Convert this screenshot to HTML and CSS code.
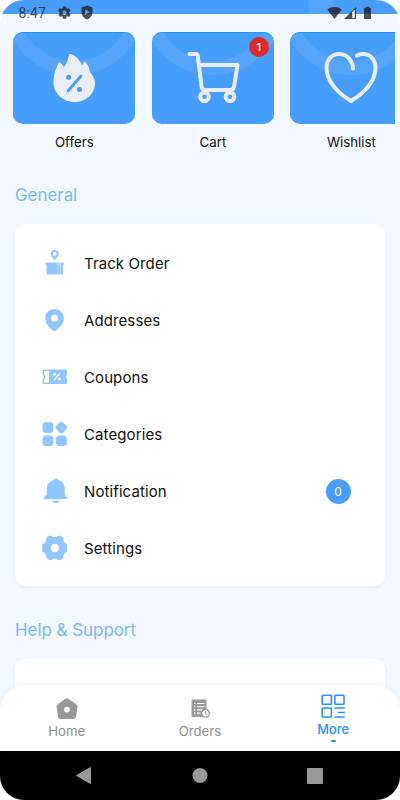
FILE: index.html
```html
<!DOCTYPE html>
<html lang="en">
<head>
<meta charset="utf-8">
<title>More</title>
<link rel="stylesheet" href="styles.css">
</head>
<body>
<div class="phone">
  <div class="status">
    <span class="time">8:47</span>
    <svg class="gear" viewBox="0 0 24 24" width="15" height="15"><path fill="currentColor" fill-rule="evenodd" d="M19.4 13a7.500 7.500 0 0 0 0-2l2.100-1.600a.5.5 0 0 0 .1-.6l-2-3.500a.5.5 0 0 0-.6-.2l-2.500 1a7 7 0 0 0-1.700-1l-.4-2.700a.5.5 0 0 0-.5-.4h-4a.5.5 0 0 0-.5.4L9 5.100a7 7 0 0 0-1.700 1l-2.500-1a.5.5 0 0 0-.6.2l-2 3.500a.5.5 0 0 0 .1.600L4.500 11a8 8 0 0 0 0 2l-2.100 1.600a.5.5 0 0 0-.1.600l2 3.500c.1.200.4.300.6.200l2.500-1a7 7 0 0 0 1.700 1l.4 2.700c0 .2.200.4.500.4h4c.3 0 .5-.2.500-.4l.4-2.700a7 7 0 0 0 1.700-1l2.500 1c.2.100.5 0 .6-.2l2-3.500a.5.5 0 0 0-.1-.6zM12 15.500a3.500 3.500 0 1 1 0-7 3.500 3.500 0 0 1 0 7z"/></svg>
    <svg class="shield" viewBox="0 0 12 15" width="12" height="15"><path fill="currentColor" fill-rule="evenodd" d="M6 .5 11.500 2.500V7c0 3.500-2.400 6.300-5.500 7.500C2.900 13.300.5 10.500.5 7V2.500zM4 4.300v5.400L9 7z"/></svg>
    <svg class="signals" viewBox="0 0 46 14" width="46" height="14"><path fill="currentColor" d="M.3 3.500C4.500.2 10.500.2 14.700 3.500L7.500 13zM17 13 29 1v12z"/><path fill="#eaf2fb" d="M25.200 6v5.900h2.600V3.400z"/><path fill="currentColor" d="M37 2h1.700V.7h3.600V2H44v11h-7z"/></svg>
  </div>
  <div class="topbar"></div>
  <main class="content">
    <div class="tiles">
      <div class="tile">
        <div class="tile-box">
          <svg viewBox="0 0 122 92" width="122" height="92"><circle class="ring" cx="61" cy="-28" r="64"/><path fill="#e9eef6" d="M58 22C63 24 67 28 69 33.500 70 32 71 30.500 71.500 29.500 75 32 76 36 77 40 80 44 82 47 82 51 82 62 73 70 61.500 70 49.500 70 40.500 61 40.500 50.500 40.500 43 43 35 46.500 30 48.500 31.500 50 33.500 51 35 54 31 55.500 26 56 22.700Q57 21.800 58 22z"/><path d="M55 59 68 44" stroke="#479dfa" stroke-width="2.800" stroke-linecap="round"/><circle cx="55.700" cy="45.300" r="2.500" fill="#479dfa"/><circle cx="66.500" cy="57.500" r="2.500" fill="#479dfa"/></svg>
        </div>
        <span>Offers</span>
      </div>
      <div class="tile">
        <div class="tile-box">
          <svg viewBox="0 0 122 92" width="122" height="92"><circle class="ring" cx="61" cy="-28" r="64"/><g class="line"><path d="M37.500 22H43.500Q45.500 22 45.800 24L49.500 54.500Q49.900 58 53 58H78.500Q81.300 58 82 55L85.500 33H47"/><circle cx="52.500" cy="64.700" r="4.300"/><circle cx="78" cy="64.700" r="4.300"/></g></svg>
          <b class="count">1</b>
        </div>
        <span>Cart</span>
      </div>
      <div class="tile">
        <div class="tile-box">
          <svg viewBox="0 0 122 92" width="122" height="92"><circle class="ring" cx="61" cy="-28" r="64"/><path class="line" d="M63 36.500C62.500 28 57 22 49 22 41.500 22 36.500 28 36.500 36 36.500 48 46 60 61 69 76 60 85.500 48 85.500 36 85.500 28 80.500 22 73.500 22Q69.500 22 66.800 23.700"/></svg>
        </div>
        <span>Wishlist</span>
      </div>
    </div>
    <h2>General</h2>
    <section class="panel">
      <div class="row"><svg viewBox="0 0 26 26" width="26" height="26"><path fill-rule="evenodd" d="M12.700 0C10.300 0 8.800 1.700 8.800 3.800 8.800 6.300 11 8.300 12.700 10.500 14.400 8.300 16.600 6.300 16.600 3.800 16.600 1.700 15.100 0 12.700 0zM12.700 2a1.900 1.900 0 1 1 0 3.800 1.900 1.900 0 0 1 0-3.800z"/><path d="M3.500 12.600H15.500L15.200 14.500H3zM18.300 12.600H21.500L22.200 14.500H18.700zM4.500 14.500H15.800V24.500H4.500zM16.200 12.600H17.700L18.100 24.500H16.200zM18.500 14.500H21V24.500H18.500z"/></svg><span>Track Order</span></div>
      <div class="row"><svg viewBox="0 0 26 26" width="26" height="26"><path fill-rule="evenodd" d="M12.500 2C7.300 2 3.200 6 3.200 11 3.200 17 8 21.500 11 23.500Q12.500 24.500 14 23.500C17 21.500 21.800 17 21.800 11 21.800 6 17.700 2 12.500 2zM12.500 7.800a3.400 3.400 0 1 1 0 6.800 3.400 3.400 0 0 1 0-6.800z"/></svg><span>Addresses</span></div>
      <div class="row"><svg viewBox="0 0 26 26" width="26" height="26"><path fill-rule="evenodd" d="M2 5.500H23.500Q25 5.500 25 7V10.500Q23.300 12.700 25 14.800V18.500Q25 20 23.500 20H2Q.5 20 .5 18.500V14.800Q3.200 12.700 .5 10.500V7Q.5 5.500 2 5.500zM1.900 6.900V9.700Q5 12.700 1.900 15.700V18.600H7V6.900z"/><path class="cut" d="m12 16 6-6.500"/><circle cx="12.700" cy="10.300" r="1.400" fill="#fff"/><circle cx="17.500" cy="15.200" r="1.400" fill="#fff"/></svg><span>Coupons</span></div>
      <div class="row"><svg viewBox="0 0 26 26" width="26" height="26"><rect x=".5" y="1" width="10.800" height="11" rx="3.500"/><rect x=".5" y="14.500" width="10.800" height="10.500" rx="3.500"/><rect x="14" y="14.500" width="10.800" height="10.500" rx="3.500"/><rect x="14.500" y="1.800" width="9.600" height="9.600" rx="2.800" transform="rotate(45 19.300 6.600)"/></svg><span>Categories</span></div>
      <div class="row"><svg viewBox="0 0 26 26" width="26" height="26"><path d="M14 .5Q12.800.5 12 1.600L9.500 3Q5 5.500 4.800 10V16L2.500 18.500Q1.500 20 2 21H25V19.500L22.800 16.500V10Q22.500 5.500 18.500 3L16 1.600Q15.200.5 14 .5zM9.500 22.800H18.200Q17 25 14 25 11 25 9.500 22.800z"/></svg><span>Notification</span><b class="badge">0</b></div>
      <div class="row"><svg viewBox="0 0 26 26" width="26" height="26"><path fill-rule="evenodd" d="M7 .7H9.500Q10.500 2.300 12.700 2.300T16 .7H18.500L21.300 2.500V5L23 8 25.200 9.300V16.500L23 18 21.300 20.500V23L18.500 25H16Q15 23.500 12.700 23.500T9.500 25H7L4.400 23V20.500L2.700 18 .3 16.500V9.300L2.700 8 4.400 5V2.500zM12.800 8.800a4.200 4.200 0 1 1 0 8.400 4.200 4.200 0 0 1 0-8.400z"/></svg><span>Settings</span></div>
    </section>
    <h2 class="help">Help &amp; Support</h2>
    <section class="panel next"></section>
  </main>
  <nav class="tabs">
    <div class="tab"><svg viewBox="0 0 22 22" width="22" height="22"><path fill="#999" fill-rule="evenodd" d="M9.600.8Q11 0 12.400.8L20 6Q21.800 7.300 21.500 9L20 19Q19.500 21 17.500 21H4.500Q2.500 21 2.100 19L.6 9Q.3 7.300 2 6zM11 8.700a2.900 2.900 0 1 0 0 5.800 2.900 2.900 0 0 0 0-5.800z"/></svg><span>Home</span></div>
    <div class="tab"><svg viewBox="0 0 22 22" width="22" height="22"><path fill="#999" d="M3 1.500H16.500Q17.500 1.500 17.500 2.500V19H3Q2.500 19 2.500 18V2.500Q2.500 1.500 3 1.500z"/><path d="M5 5.500h1.500M8 5.500h7.500M5 8.700h1.500M8 8.700h7.500M5 11.900h1.500M8 11.900h5M5 15.100h1.500M8 15.100h3.500" stroke="#fff" stroke-width="1.100"/><circle cx="16.500" cy="15.300" r="4.500" fill="#999"/><circle cx="16.500" cy="15.300" r="3.100" fill="#fff"/><path d="M16.500 13v2.500l1.300 1" stroke="#999" stroke-width="1.200" fill="none"/></svg><span>Orders</span></div>
    <div class="tab active"><svg viewBox="0 0 24 24" width="24" height="24"><g fill="none" stroke="#2492fb" stroke-width="1.600"><rect x="1.200" y="1.200" width="9.200" height="9" rx=".8"/><rect x="13.800" y="1.200" width="9.200" height="9" rx=".8"/><rect x="1.200" y="14" width="9.200" height="9" rx=".8"/><path d="M13.300 14H23.800M17 18.500H23.800M13.300 23H23.800"/></g></svg><span>More</span><i></i></div>
  </nav>
  <div class="system">
    <svg viewBox="0 0 400 49" width="400" height="49"><g fill="#999"><path d="M76.500 24.500 90.500 16.500V32.500z" stroke="#999" stroke-linejoin="round"/><circle cx="200" cy="24.500" r="7.500"/><rect x="307" y="17" width="16" height="16" rx="1"/></g></svg>
  </div>
</div>
</body>
</html>
```
FILE: styles.css
```css
* { box-sizing: border-box; }
body { margin: 0; background: #fff; font-family: Inter, "Liberation Sans", sans-serif; color: #111; }
.phone { position: relative; width: 400px; height: 800px; overflow: hidden; border-radius: 24px; background: #f3f8ff; display: flex; flex-direction: column; }
.topbar { height: 13.5px; flex: none; background: linear-gradient(90deg, transparent 308px, #ffffff12 309px 333px, transparent 335px) #479dfa; }
.status { position: absolute; top: 0; left: 0; width: 400px; height: 25px; display: flex; align-items: center; padding: 0 27px 0 18.5px; color: rgba(25, 25, 25, .76); z-index: 1; }
.time { font: 400 14px/16px Roboto, sans-serif; letter-spacing: .1px; width: 38.5px; }
.gear, .shield, .signals { display: block; }
.shield { margin-left: 9px; }
.signals { margin-left: auto; }
.content { flex: 1; min-height: 0; overflow: hidden; }
.tiles { display: flex; gap: 16.5px; margin: 18.5px 5px 0 13.4px; overflow: hidden; }
.tile { flex: none; width: 122px; text-align: center; font-size: 14px; line-height: 18px; }
.tile-box { position: relative; height: 91.500px; border-radius: 10px; background: #479dfa; overflow: hidden; margin-bottom: 9px; box-shadow: inset 0 1px 0 #1c96f8; }
.tile-box svg { display: block; }
.tile > span { display: block; font-size: 13.300px; }
.ring { fill: none; stroke: #fff; stroke-opacity: .08; stroke-width: 14px; }
.line { fill: none; stroke: #e9eef6; stroke-width: 4px; stroke-linecap: round; stroke-linejoin: round; }
.count { position: absolute; top: 5px; right: 5px; width: 20px; height: 20px; border-radius: 50%; background: #d92c2c; color: #fff; font-size: 11px; line-height: 20px; font-weight: 500; }
h2 { margin: 32px 0 0 15px; font-size: 16.900px; line-height: 24px; font-weight: 400; color: #78b7fd; }
.panel { margin: 17px 15px 0; height: 362px; border-radius: 10px; background: #fff; padding: 11px 34.5px 0 27px; box-shadow: 0 1px 4px rgba(71, 130, 210, .07); }
.row { display: flex; align-items: center; height: 57px; font-size: 15px; line-height: 20px; letter-spacing: .1px; }
.row span { padding-top: 1px; }
.row svg { flex: none; margin-right: 16px; fill: #91c5fd; }
.row .cut { stroke: #fff; stroke-width: 1.400px; fill: none; }
.badge { margin-left: auto; width: 25px; height: 25px; border-radius: 50%; background: #479dfa; color: #fff; text-align: center; font-size: 12px; line-height: 25px; font-weight: 400; }
.help { margin-top: 32px; }
.next { height: 60px; }
.tabs { position: absolute; left: 0; top: 685px; width: 400px; height: 66px; border-radius: 25px 25px 0 0; background: #fff; display: grid; grid-template-columns: repeat(3, 133.300px); box-shadow: 0 -1px 5px rgba(70, 130, 230, .1); }
.tab { display: flex; flex-direction: column; align-items: center; padding-top: 12.500px; font-size: 13.200px; line-height: 18px; color: #8e8e8e; }
.tab svg { display: block; margin-bottom: 2px; }
.tab.active { padding-top: 9px; color: #2492fb; font-weight: 500; font-size: 12.900px; }
.tab.active svg { margin-bottom: 3px; }
.tab i { width: 5px; height: 2.500px; margin-top: .5px; border-radius: 1px; background: #2492fb; }
.system { height: 49px; flex: none; background: #000; }
.system svg { display: block; }
```
